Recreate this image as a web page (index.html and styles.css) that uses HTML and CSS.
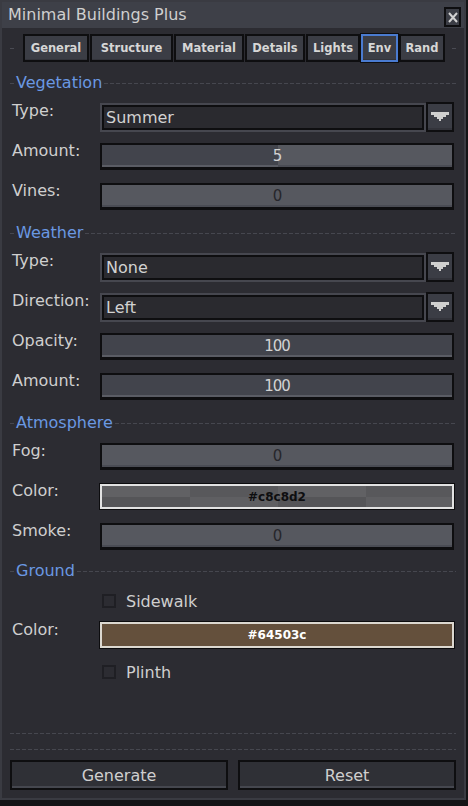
FILE: index.html
```html
<!DOCTYPE html>
<html lang="en">
<head>
<meta charset="utf-8">
<title>Minimal Buildings Plus</title>
<link rel="stylesheet" href="styles.css">
</head>
<body>
<div class="window">
  <header class="titlebar">
    <span class="title">Minimal Buildings Plus</span>
    <button class="close" aria-label="Close">
      <svg width="10" height="11" viewBox="0 0 10 11"><path d="M1 1L9 10M9 1L1 10" stroke="#d2d2d2" stroke-width="2" fill="none"/></svg>
    </button>
  </header>

  <nav class="tabbar">
    <span class="tabdash"></span>
    <div class="tabs">
      <div class="tab">General</div>
      <div class="tab">Structure</div>
      <div class="tab">Material</div>
      <div class="tab">Details</div>
      <div class="tab">Lights</div>
      <div class="tab active">Env</div>
      <div class="tab">Rand</div>
    </div>
    <span class="tabdash"></span>
  </nav>

  <section class="group first">
    <div class="group-head"><span>Vegetation</span></div>
    <div class="rows">
      <div class="row">
        <span class="label">Type:</span>
        <div class="dropdown">
          <div class="dd-box">Summer</div>
          <div class="dd-btn"><svg width="18" height="10" viewBox="0 0 18 10"><path d="M0 0H18V3H15V5H12V7H10V9H8V7H6V5H3V3H0Z" fill="#d0d0d0"/></svg></div>
        </div>
      </div>
      <div class="row">
        <span class="label">Amount:</span>
        <div class="slider">
          <div class="fill" style="width:50.3%"></div>
          <span class="val on">5</span>
        </div>
      </div>
      <div class="row">
        <span class="label">Vines:</span>
        <div class="slider">
          <div class="fill" style="width:0%"></div>
          <span class="val">0</span>
        </div>
      </div>
    </div>
  </section>

  <section class="group">
    <div class="group-head"><span>Weather</span></div>
    <div class="rows">
      <div class="row">
        <span class="label">Type:</span>
        <div class="dropdown">
          <div class="dd-box">None</div>
          <div class="dd-btn"><svg width="18" height="10" viewBox="0 0 18 10"><path d="M0 0H18V3H15V5H12V7H10V9H8V7H6V5H3V3H0Z" fill="#d0d0d0"/></svg></div>
        </div>
      </div>
      <div class="row">
        <span class="label">Direction:</span>
        <div class="dropdown">
          <div class="dd-box">Left</div>
          <div class="dd-btn"><svg width="18" height="10" viewBox="0 0 18 10"><path d="M0 0H18V3H15V5H12V7H10V9H8V7H6V5H3V3H0Z" fill="#d0d0d0"/></svg></div>
        </div>
      </div>
      <div class="row">
        <span class="label">Opacity:</span>
        <div class="slider">
          <div class="fill" style="width:100%"></div>
          <span class="val on">100</span>
        </div>
      </div>
      <div class="row">
        <span class="label">Amount:</span>
        <div class="slider">
          <div class="fill" style="width:100%"></div>
          <span class="val on">100</span>
        </div>
      </div>
    </div>
  </section>

  <section class="group">
    <div class="group-head"><span>Atmosphere</span></div>
    <div class="rows">
      <div class="row">
        <span class="label">Fog:</span>
        <div class="slider">
          <div class="fill" style="width:0%"></div>
          <span class="val">0</span>
        </div>
      </div>
      <div class="row">
        <span class="label">Color:</span>
        <div class="swatch swatch-fog"><span>#c8c8d2</span></div>
      </div>
      <div class="row">
        <span class="label">Smoke:</span>
        <div class="slider">
          <div class="fill" style="width:0%"></div>
          <span class="val">0</span>
        </div>
      </div>
    </div>
  </section>

  <section class="group ground">
    <div class="group-head"><span>Ground</span></div>
    <div class="rows">
      <div class="row row-check">
        <span class="label"></span>
        <label class="check"><span class="box"></span><span>Sidewalk</span></label>
      </div>
      <div class="row">
        <span class="label">Color:</span>
        <div class="swatch swatch-ground"><span>#64503c</span></div>
      </div>
      <div class="row row-check">
        <span class="label"></span>
        <label class="check"><span class="box"></span><span>Plinth</span></label>
      </div>
    </div>
  </section>

  <footer class="footer">
    <div class="rule"></div>
    <div class="rule"></div>
    <div class="buttons">
      <button class="btn">Generate</button>
      <button class="btn">Reset</button>
    </div>
  </footer>
</div>
</body>
</html>
```

FILE: styles.css
```css
* { box-sizing: border-box; }
html, body { margin: 0; padding: 0; }
body {
  width: 468px;
  height: 806px;
  overflow: hidden;
  background: #141416;
  font-family: "DejaVu Sans", "Liberation Sans", sans-serif;
  font-size: 16px;
  color: #cfcfcf;
}
.window {
  width: 466px;
  height: 800px;
  border: 2px solid #3a3b42;
  background: #2c2c32;
  display: flex;
  flex-direction: column;
}

/* title */
.titlebar {
  height: 26px;
  flex: none;
  background: #3e4048;
  display: flex;
  justify-content: space-between;
  align-items: flex-start;
  padding: 0 3px 0 6px;
}
.title { line-height: 26px; color: #cfcfcf; }
.close {
  margin-top: 5px;
  width: 17px;
  height: 20px;
  padding: 0;
  border: 2px solid #0e0e10;
  background: #3b3d45;
  display: flex;
  align-items: center;
  justify-content: center;
}

/* tabs */
.tabbar {
  flex: none;
  margin-top: 6px;
  height: 28px;
  display: flex;
  align-items: center;
  padding: 0 8px;
}
.tabdash { width: 4px; height: 1px; background: #4a4b53; }
.tabs {
  margin: 0 7px 0 9px;
  display: grid;
  grid-template-columns: 66px 83px 70px 60px 54px 37px 46px;
  gap: 1px;
  height: 28px;
}
.tab {
  border: 2px solid #0e0e10;
  background: #3b3d45;
  color: #d6d6d6;
  font-weight: bold;
  font-size: 11.5px;
  display: flex;
  align-items: center;
  justify-content: center;
  box-shadow: inset 0 -1px 0 #33343b;
}
.tab.active {
  border-color: #4a7bd0;
  outline: 1px solid #0e0e10;
}

/* groups */
.group { flex: none; }
.group.first { margin-top: 11px; }
.group.ground { margin-top: -2px; }
.group-head {
  height: 20px;
  display: flex;
  align-items: center;
  padding: 0 8px;
  color: #6a98e2;
}
.group-head::before,
.group-head::after {
  content: "";
  height: 1px;
  background: repeating-linear-gradient(90deg, #46474f 0 4px, transparent 4px 6px);
}
.group-head::before { width: 5px; margin-right: 1px; }
.group-head::after { flex: 1; margin-left: 2px; }
.group-head span { line-height: 20px; }

.rows { margin-top: 10px; }
.row {
  height: 40px;
  display: grid;
  grid-template-columns: 88px 1fr;
  align-items: start;
  padding: 0 10px;
}
.label { line-height: 17px; margin-top: -1px; color: #cfcfcf; }

/* dropdown */
.dropdown { display: flex; height: 29px; }
.dd-box {
  flex: 1;
  border: 2px solid #46474f;
  box-shadow: inset 0 0 0 2px #0e0e10;
  background: #2a2a2f;
  padding-left: 4px;
  display: flex;
  align-items: center;
  color: #d2d2d2;
}
.dd-btn {
  width: 28px;
  margin-top: -1px;
  height: 30px;
  border: 2px solid #0e0e10;
  background: #3b3d45;
  box-shadow: inset 0 -2px 0 #33343b;
  display: flex;
  align-items: center;
  justify-content: center;
}

/* slider */
.slider {
  height: 26px;
  border: 2px solid #0e0e10;
  box-shadow: 0 1px 0 #0e0e10;
  background: linear-gradient(0deg, #4a4c54 0 2px, #56585f 2px);
  display: grid;
}
.slider > * { grid-area: 1 / 1; }
.fill {
  justify-self: start;
  height: 100%;
  background: linear-gradient(0deg, #5a5c64 0 2px, #42444c 2px);
}
.val {
  height: 100%;
  display: flex;
  align-items: center;
  justify-content: center;
  font-size: 15px;
  letter-spacing: -1px;
  color: #26262b;
}
.val.on { color: #d2d2d2; }

/* swatch */
.swatch {
  height: 25px;
  border: 2px solid #e2e2e2;
  box-shadow: 0 0 0 1px #0c0c0e;
  display: flex;
  align-items: center;
  justify-content: center;
  font-weight: bold;
  font-size: 12px;
}
.swatch-fog {
  background: conic-gradient(#58585b 0 25%, #5f5f62 0 50%, #555558 0 75%, #616164 0) 0 0 / 176px 22px;
  color: #0e0e10;
  margin-top: 1px;
}
.swatch-ground {
  height: 26px;
  border-color: #dcd8d0;
  background: #64503c;
  color: #ffffff;
}

/* checkbox */
.row-check { height: 31px; }
.row-check:last-child { height: 40px; }
.check {
  display: flex;
  align-items: center;
  gap: 10px;
  margin-left: 2px;
  margin-top: 3px;
  height: 14px;
  color: #cfcfcf;
}
.check .box {
  width: 14px;
  height: 14px;
  border: 2px solid #1f1f24;
}

/* footer */
.footer {
  margin-top: auto;
  padding: 0 8px 8px;
}
.rule {
  height: 1px;
  background: repeating-linear-gradient(90deg, #46474f 0 4px, transparent 4px 6px);
  margin-bottom: 15px;
}
.rule + .rule { margin-bottom: 10px; }
.buttons {
  display: grid;
  grid-template-columns: 1fr 1fr;
  gap: 10px;
}
.btn {
  height: 30px;
  border: 2px solid #0e0e10;
  background: #2f3036;
  box-shadow: inset 0 -2px 0 #45474f;
  font-family: "DejaVu Sans", "Liberation Sans", sans-serif;
  font-size: 16px;
  color: #cfcfcf;
  padding: 0;
}
```
